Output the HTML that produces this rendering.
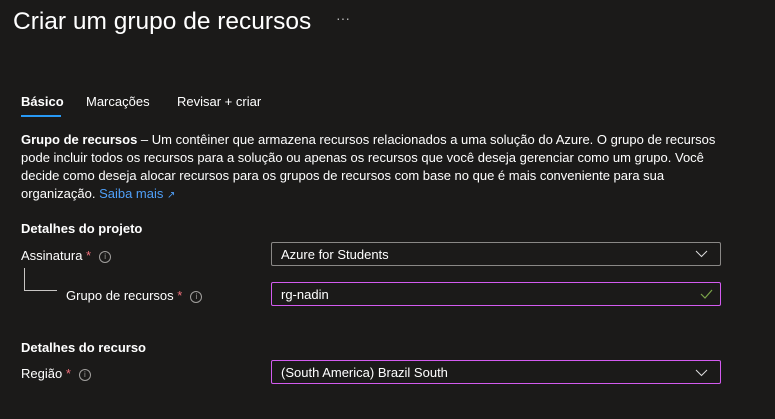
<!DOCTYPE html>
<html><head><meta charset="utf-8"><style>
body{margin:0;width:775px;height:419px;background:#1b1a19;color:#fff;font-family:"Liberation Sans",sans-serif;position:relative;overflow:hidden}
.a{position:absolute;white-space:nowrap}
.t{font-size:13px;letter-spacing:0}
.inp{position:absolute;left:271px;width:448px;height:22px;border:1px solid #8a8886;border-radius:2px;box-sizing:content-box}
.inp span{position:absolute;left:9px;top:4px;font-size:13px}
.p{border-color:#d35bf0}
.info{display:inline-block;width:10px;height:10px;border:1px solid #a19f9d;border-radius:50%;font-size:8px;line-height:10px;text-align:center;color:#a19f9d;vertical-align:1px;margin-left:8px}
.req{color:#f1707b}
</style></head><body>
<div class="a" style="left:13px;top:8px;font-size:24.5px">Criar um grupo de recursos</div>
<div class="a" style="left:336px;top:10px;font-size:14px;color:#bbb">···</div>
<div class="a t" style="left:21px;top:94px;font-weight:bold">Básico</div>
<div style="position:absolute;left:21px;top:115px;width:40px;height:2px;background:#2899f5"></div>
<div class="a t" style="left:86px;top:94px">Marcações</div>
<div class="a t" style="left:177px;top:94px">Revisar + criar</div>
<div class="a t" style="left:21px;top:131px;line-height:18px">
<b>Grupo de recursos</b> – Um contêiner que armazena recursos relacionados a uma solução do Azure. O grupo de recursos<br>
pode incluir todos os recursos para a solução ou apenas os recursos que você deseja gerenciar como um grupo. Você<br>
decide como deseja alocar recursos para os grupos de recursos com base no que é mais conveniente para sua<br>
organização. <span style="color:#4f9ff7">Saiba mais</span> <span style="color:#4f9ff7;font-size:10px">↗</span></div>
<div class="a t" style="left:21px;top:221px;font-weight:bold">Detalhes do projeto</div>
<div class="a t" style="left:21px;top:248px">Assinatura <span class="req">*</span><span class="info">i</span></div>
<div style="position:absolute;left:24px;top:268px;width:32px;height:22px;border-left:1px solid #c8c6c4;border-bottom:1px solid #c8c6c4"></div>
<div class="a t" style="left:66px;top:288px">Grupo de recursos <span class="req">*</span><span class="info">i</span></div>
<div class="inp" style="top:242px"><span>Azure for Students</span>
<svg style="position:absolute;right:12px;top:7px" width="13" height="8"><path d="M1 1l5.5 5.5L12 1" stroke="#ddd" fill="none"/></svg></div>
<div class="inp p" style="top:282px"><span>rg-nadin</span>
<svg style="position:absolute;right:7px;top:6px" width="13" height="10"><path d="M1 5l4 4 7-8" stroke="#7ba44a" fill="none" stroke-width="1.2"/></svg></div>
<div class="a t" style="left:21px;top:340px;font-weight:bold">Detalhes do recurso</div>
<div class="a t" style="left:21px;top:366px">Região <span class="req">*</span><span class="info">i</span></div>
<div class="inp p" style="top:360px"><span>(South America) Brazil South</span>
<svg style="position:absolute;right:12px;top:8px" width="13" height="8"><path d="M1 1l5.5 5.5L12 1" stroke="#ddd" fill="none"/></svg></div>
</body></html>
